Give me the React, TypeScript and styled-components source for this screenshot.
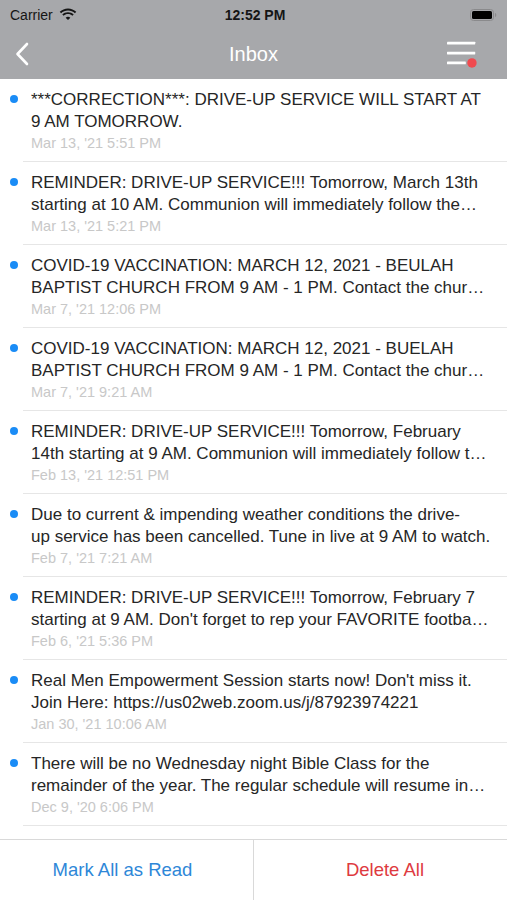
import styled, { createGlobalStyle } from 'styled-components'

const GlobalStyle = createGlobalStyle`
  html, body {
    margin: 0;
    padding: 0;
    background: #ffffff;
  }
  body {
    font-family: "Liberation Sans", Arial, sans-serif;
    -webkit-font-smoothing: antialiased;
  }
`

// the app breaks "drive-up" at the hyphen on this one, keep it that way
const messages = [
  { text: '***CORRECTION***: DRIVE-UP SERVICE WILL START AT 9 AM TOMORROW.', date: "Mar 13, '21 5:51 PM" },
  { text: 'REMINDER: DRIVE-UP SERVICE!!! Tomorrow, March 13th starting at 10 AM. Communion will immediately follow the service.', date: "Mar 13, '21 5:21 PM" },
  { text: 'COVID-19 VACCINATION: MARCH 12, 2021 - BEULAH BAPTIST CHURCH FROM 9 AM - 1 PM. Contact the church office to register.', date: "Mar 7, '21 12:06 PM" },
  { text: 'COVID-19 VACCINATION: MARCH 12, 2021 - BUELAH BAPTIST CHURCH FROM 9 AM - 1 PM. Contact the church office to register.', date: "Mar 7, '21 9:21 AM" },
  { text: 'REMINDER: DRIVE-UP SERVICE!!! Tomorrow, February 14th starting at 9 AM. Communion will immediately follow the service.', date: "Feb 13, '21 12:51 PM" },
  { text: 'Due to current & impending weather conditions the drive-\nup service has been cancelled. Tune in live at 9 AM to watch.', date: "Feb 7, '21 7:21 AM" },
  { text: "REMINDER: DRIVE-UP SERVICE!!! Tomorrow, February 7 starting at 9 AM. Don't forget to rep your FAVORITE football team.", date: "Feb 6, '21 5:36 PM" },
  { text: "Real Men Empowerment Session starts now! Don't miss it. Join Here: https://us02web.zoom.us/j/87923974221", date: "Jan 30, '21 10:06 AM" },
  { text: 'There will be no Wednesday night Bible Class for the remainder of the year. The regular schedule will resume in January.', date: "Dec 9, '20 6:06 PM" },
  { text: 'Happy Thanksgiving from our church family to yours!', date: "Nov 26, '20 9:00 AM" },
]

const Screen = styled.div`
  width: 507px;
  height: 900px;
  display: flex;
  flex-direction: column;
  overflow: hidden;
  background: #ffffff;
`

const Top = styled.div`
  background: #a7a8ab;
  display: flex;
  flex-direction: column;
`

const StatusBar = styled.div`
  height: 29px;
  display: grid;
  grid-template-columns: 1fr auto 1fr;
  align-items: center;
  padding: 0 10px;
  font-size: 14px;
  color: #151515;
`

const Carrier = styled.div`
  display: flex;
  align-items: center;
  gap: 6px;
`

const Clock = styled.div`
  font-weight: 700;
  padding-left: 3px;
`

const Battery = styled.div`
  justify-self: end;
  display: flex;
  align-items: center;
`

const NavBar = styled.div`
  height: 50px;
  display: grid;
  grid-template-columns: 60px 1fr 60px;
  align-items: center;
`

const BackButton = styled.div`
  padding-left: 14px;
  display: flex;
  align-items: center;
`

const Title = styled.div`
  text-align: center;
  color: #ffffff;
  font-size: 20px;
  font-weight: 500;
`

const MenuButton = styled.div`
  display: flex;
  justify-content: flex-end;
  padding-right: 28px;
`

const List = styled.div`
  flex: 1;
  overflow: hidden;
`

const Item = styled.div`
  display: flex;
  align-items: flex-start;
  padding-left: 10px;
`

const Dot = styled.span<{ $unread: boolean }>`
  flex: none;
  width: 8px;
  height: 8px;
  border-radius: 50%;
  margin-top: 16px;
  margin-right: 5px;
  background: ${p => (p.$unread ? '#1a8cf6' : 'transparent')};
`

const Body = styled.div`
  flex: 1;
  min-width: 0;
  padding: 10px 16px 9px 8px;
  border-bottom: 1px solid #e6e6e6;
`

const Text = styled.div`
  font-size: 17px;
  line-height: 22px;
  color: #262626;
  white-space: pre-line;
  display: -webkit-box;
  -webkit-line-clamp: 2;
  -webkit-box-orient: vertical;
  overflow: hidden;
`

const Date = styled.div`
  margin-top: 2px;
  font-size: 14.5px;
  line-height: 17px;
  color: #c8c8c8;
`

const Footer = styled.div`
  flex: none;
  height: 60px;
  border-top: 1px solid #d9d9d9;
  display: grid;
  grid-template-columns: 254px 1fr;
`

const FooterButton = styled.div<{ $tone: 'blue' | 'red' }>`
  display: flex;
  align-items: center;
  justify-content: center;
  font-size: 18.5px;
  color: ${p => (p.$tone === 'blue' ? '#2e87d8' : '#de3a40')};

  &:first-child {
    border-right: 1px solid #d9d9d9;
    padding-right: 8px;
  }
  &:last-child {
    padding-left: 9px;
  }
`

function WifiIcon() {
  return (
    <svg width="18" height="13" viewBox="0 0 17 12">
      <path d="M8.5 2.2c2.5 0 4.8 1 6.5 2.6l1.3-1.3C14.2 1.5 11.5.3 8.5.3S2.8 1.5.7 3.5L2 4.8c1.7-1.6 4-2.6 6.5-2.6z" fill="#151515" />
      <path d="M8.5 5.6c1.6 0 3 .6 4.1 1.6l1.3-1.3C12.5 4.6 10.6 3.8 8.5 3.8S4.5 4.6 3.1 5.9l1.3 1.3c1.1-1 2.5-1.6 4.1-1.6z" fill="#151515" />
      <path d="M8.5 9l2.2-2.2c-.6-.5-1.4-.9-2.2-.9s-1.6.3-2.2.9L8.5 9z" fill="#151515" transform="translate(0 2.2)" />
    </svg>
  )
}

function BatteryIcon() {
  return (
    <svg width="27" height="12" viewBox="0 0 27 12">
      <rect x="0.5" y="0.5" width="23" height="11" rx="3" fill="none" stroke="#8a8a8c" />
      <rect x="2" y="2" width="20" height="8" rx="1.6" fill="#000" />
      <path d="M25 4v4c.8-.3 1.3-1.1 1.3-2s-.5-1.7-1.3-2z" fill="#8a8a8c" />
    </svg>
  )
}

function BackIcon() {
  return (
    <svg width="16" height="24" viewBox="0 0 16 24">
      <path d="M13 2L3.5 12 13 22" fill="none" stroke="#ffffff" strokeWidth="2.6" strokeLinecap="round" strokeLinejoin="round" />
    </svg>
  )
}

function MenuIcon() {
  return (
    <svg width="34" height="30" viewBox="0 0 34 30">
      <rect x="0" y="2" width="30" height="3" rx="0.5" fill="#ffffff" />
      <rect x="0" y="12.5" width="30" height="3" rx="0.5" fill="#ffffff" />
      <rect x="0" y="23" width="20" height="3" rx="0.5" fill="#ffffff" />
      <circle cx="26.5" cy="24.5" r="5" fill="#f04a4f" />
    </svg>
  )
}

export default function App() {
  return (
    <>
      <GlobalStyle />
      <Screen>
        <Top>
          <StatusBar>
            <Carrier>
              Carrier <WifiIcon />
            </Carrier>
            <Clock>12:52 PM</Clock>
            <Battery>
              <BatteryIcon />
            </Battery>
          </StatusBar>
          <NavBar>
            <BackButton>
              <BackIcon />
            </BackButton>
            <Title>Inbox</Title>
            <MenuButton>
              <MenuIcon />
            </MenuButton>
          </NavBar>
        </Top>
        <List>
          {messages.map((m, i) => (
            <Item key={i}>
              <Dot $unread />
              <Body>
                <Text>{m.text}</Text>
                <Date>{m.date}</Date>
              </Body>
            </Item>
          ))}
        </List>
        <Footer>
          <FooterButton $tone="blue">Mark All as Read</FooterButton>
          <FooterButton $tone="red">Delete All</FooterButton>
        </Footer>
      </Screen>
    </>
  )
}
